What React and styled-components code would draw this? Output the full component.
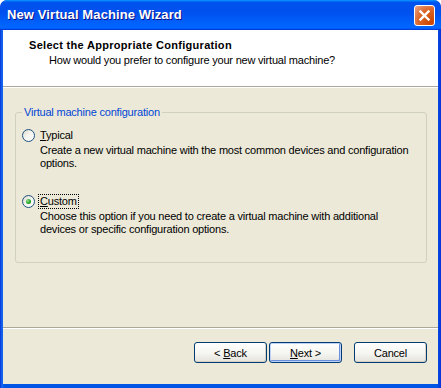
import React from "react";
import styled, { createGlobalStyle } from "styled-components";

const GlobalStyle = createGlobalStyle`
  html, body {
    margin: 0;
    padding: 0;
    background: #ffffff;
  }
  body {
    font-family: "Liberation Sans", Arial, sans-serif;
    font-size: 11px;
    letter-spacing: -0.2px;
    color: #000;
  }
`;

const App = () => {
  return (
    <>
      <GlobalStyle />
      <Window>
        <TitleBar>
          <Title>New Virtual Machine Wizard</Title>
          <CloseButton aria-label="Close">
            <svg width="13" height="13" viewBox="0 0 13 13">
              <path
                d="M2.5 2.5 L10.5 10.5 M10.5 2.5 L2.5 10.5"
                stroke="#fff"
                strokeWidth="2.4"
                strokeLinecap="square"
              />
            </svg>
          </CloseButton>
        </TitleBar>

        <Client>
          <Header>
            <HeaderTitle>Select the Appropriate Configuration</HeaderTitle>
            <HeaderSub>How would you prefer to configure your new virtual machine?</HeaderSub>
          </Header>
          <Etched />

          <Main>
            <Group>
              <Legend>Virtual machine configuration</Legend>

              <Option>
                <OptionRow>
                  <Radio />
                  <OptionLabel>
                    <u>T</u>ypical
                  </OptionLabel>
                </OptionRow>
                <Description>
                  Create a new virtual machine with the most common devices and configuration
                  <br />
                  options.
                </Description>
              </Option>

              <Option $spaced>
                <OptionRow>
                  <Radio $checked />
                  <OptionLabel $focused>
                    <u>C</u>ustom
                  </OptionLabel>
                </OptionRow>
                <Description>
                  Choose this option if you need to create a virtual machine with additional
                  <br />
                  devices or specific configuration options.
                </Description>
              </Option>
            </Group>
          </Main>

          <Etched />
          <Footer>
            <Button>
              &lt; <u>B</u>ack
            </Button>
            <Button $default>
              <u>N</u>ext &gt;
            </Button>
            <Button $gap>Cancel</Button>
          </Footer>
        </Client>
      </Window>
    </>
  );
};

export default App;

// Styled Components

const Window = styled.div`
  width: 441px;
  height: 388px;
  display: flex;
  flex-direction: column;
  box-sizing: border-box;
  background: linear-gradient(90deg, #0831d9 0, #166aee 2px, #0055e5 4px, #0055e5 calc(100% - 4px), #0831d9 100%);
  border-radius: 7px 7px 0 0;
  padding: 0 3px 4px 3px;
  overflow: hidden;
`;

const TitleBar = styled.div`
  height: 30px;
  margin: 0 -3px;
  padding: 0 6px 0 7px;
  display: flex;
  align-items: center;
  justify-content: space-between;
  background: linear-gradient(
    180deg,
    #0997ff 0,
    #0053ee 8%,
    #0050ee 40%,
    #0066ff 88%,
    #0066ff 93%,
    #005bff 95%,
    #003dd7 96%,
    #003dd7 100%
  );
  border-radius: 7px 7px 0 0;
`;

const Title = styled.span`
  color: #fff;
  font-family: "Liberation Sans", Arial, sans-serif;
  font-weight: bold;
  font-size: 13px;
  letter-spacing: 0.1px;
  text-shadow: 1px 1px #0f1089;
  padding-bottom: 1px;
`;

const CloseButton = styled.div`
  width: 21px;
  height: 21px;
  box-sizing: border-box;
  border: 1px solid #fff;
  border-radius: 3px;
  background: radial-gradient(circle at 85% 85%, #cc4600 0, #dc6527 55%, #e8a58c 100%);
  display: flex;
  align-items: center;
  justify-content: center;
  margin-top: 1px;
`;

const Client = styled.div`
  flex: 1;
  display: flex;
  flex-direction: column;
  background: #ece9d8;
`;

const Header = styled.div`
  height: 56px;
  box-sizing: border-box;
  background: #fff;
  padding: 9px 0 0 26px;
  line-height: 13px;
`;

const HeaderTitle = styled.div`
  font-weight: bold;
  letter-spacing: 0.3px;
`;

const HeaderSub = styled.div`
  margin-top: 2px;
  padding-left: 20px;
`;

const Etched = styled.div`
  height: 1px;
  background: #aca899;
  border-bottom: 1px solid #fff;
`;

const Main = styled.div`
  flex: 1;
  padding: 18px 11px 0 12px;
`;

const Group = styled.fieldset`
  margin: 0;
  height: 157px;
  box-sizing: border-box;
  border: 1px solid #d0d0bf;
  border-radius: 3px;
  padding: 9px 6px 0 6px;
`;

const Legend = styled.legend`
  color: #0046d5;
  padding: 0 2px;
  line-height: 13px;
`;

const Option = styled.div`
  margin-top: ${(p) => (p.$spaced ? "24px" : "0")};
  line-height: 13px;
`;

const OptionRow = styled.div`
  display: flex;
  align-items: center;
  gap: 4px;
  height: 14px;
`;

const Radio = styled.span`
  width: 13px;
  height: 13px;
  box-sizing: border-box;
  border-radius: 50%;
  border: 1px solid #1c5180;
  background: linear-gradient(135deg, #dcd9cb 0, #f4f3ee 45%, #ffffff 100%);
  display: flex;
  align-items: center;
  justify-content: center;

  &::after {
    content: "";
    display: ${(p) => (p.$checked ? "block" : "none")};
    width: 5px;
    height: 5px;
    border-radius: 50%;
    background: radial-gradient(circle at 35% 35%, #8ee08e 0, #21a121 60%, #1a8a1a 100%);
  }
`;

const OptionLabel = styled.span`
  padding: 0 1px;
  border: 1px dotted ${(p) => (p.$focused ? "#000" : "transparent")};
  margin-left: -1px;
`;

const Description = styled.div`
  margin: 2px 0 0 18px;
  white-space: nowrap;
`;

const Footer = styled.div`
  flex: 0 0 42px;
  display: flex;
  align-items: flex-start;
  justify-content: flex-end;
  padding: 13px 11px 0 0;
  gap: 2px;
`;

const Button = styled.button`
  width: 73px;
  height: 21px;
  margin-left: ${(p) => (p.$gap ? "10px" : "0")};
  box-sizing: border-box;
  border: 1px solid #003c74;
  border-radius: 3px;
  background: linear-gradient(180deg, #ffffff 0%, #f5f5f1 55%, #e3e2da 100%);
  box-shadow: ${(p) =>
    p.$default
      ? "inset 0 0 0 1px #bdd2f6, inset -1px -1px 0 1px #6a8fdc"
      : "inset -1px -1px 0 0 #d6d0c5"};
  font-family: "Liberation Sans", Arial, sans-serif;
  font-size: 11px;
  letter-spacing: -0.2px;
  color: #000;
  padding: 0;
  cursor: pointer;
`;
